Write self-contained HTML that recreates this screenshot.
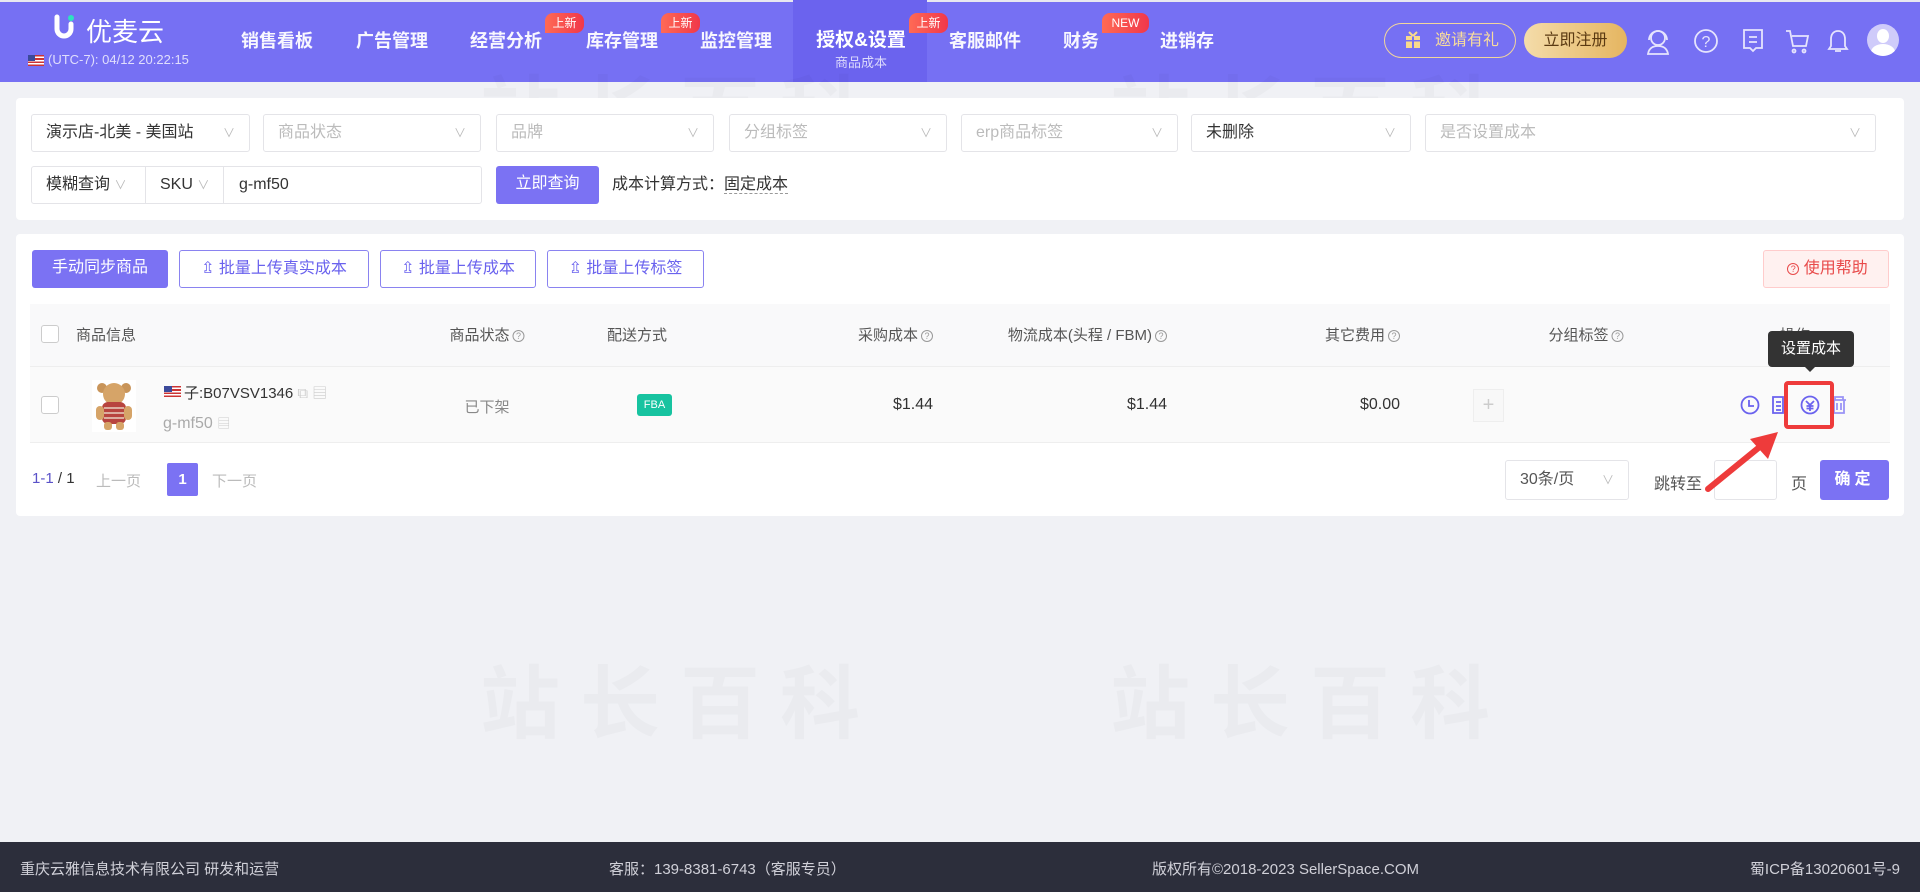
<!DOCTYPE html>
<html><head><meta charset="utf-8">
<style>
*{box-sizing:border-box;margin:0;padding:0}
body{width:1920px;height:892px;background:#f0f1f5;font-family:"Liberation Sans","Noto Sans CJK SC",sans-serif;font-size:16px;color:#333;position:relative;overflow:hidden}
.a{position:absolute}
.hdr{left:0;top:0;width:1920px;height:82px;background:#7670f3;border-top:2px solid #e8e8f0}
.nav{top:27px;color:#fff;font-size:18px;font-weight:bold;transform:translateX(-50%);white-space:nowrap;opacity:.95}
.badge{height:20px;background:linear-gradient(90deg,#ff6a55,#f0374a);color:#fff;font-size:12px;line-height:20px;text-align:center;border-radius:8px 8px 8px 0}
.card{background:#fff;border-radius:4px}
.sel{height:38px;border:1px solid #e4e4e8;border-radius:3px;background:#fff;font-size:16px;line-height:36px;padding-left:14px;color:#bbb}
.sel .ch{position:absolute;right:14px;top:0;color:#bbb;font-size:12px}
.btn{height:38px;border-radius:3px;font-size:16px;line-height:36px;text-align:center}
.ob{border:1px solid #8a83f0;color:#6a62ee;background:#fff}
.pb{background:#7b72f3;color:#fff}
.th{top:324px;font-size:15px;color:#555;white-space:nowrap}
.q{display:inline-block;width:12px;height:12px;border:1px solid #999;border-radius:50%;font-size:9px;line-height:10px;text-align:center;color:#999;vertical-align:1px;margin-left:3px}
.cb{width:18px;height:18px;border:1px solid #ccc;border-radius:3px;background:#fff}
.ft{top:858px;color:#d0d0d8;font-size:15px;white-space:nowrap}
.wm{font-size:80px;color:rgba(0,0,0,.025);letter-spacing:20px;font-weight:bold}
</style></head><body>
<div class="a hdr"></div>
<svg class="a" style="left:52px;top:14px" width="30" height="28" viewBox="0 0 30 28"><path d="M5 3v12a7 7 0 0 0 14 0V10" stroke="#fff" stroke-width="5" fill="none" stroke-linecap="round"/><circle cx="19" cy="4" r="3" fill="#2ee0c0"/></svg>
<div class="a" style="left:86px;top:12px;color:#fff;font-size:26px">优麦云</div>
<div class="a" style="left:28px;top:55px;width:16px;height:11px;background:repeating-linear-gradient(#c33 0 1.6px,#fff 1.6px 3.2px)"><div style="width:7px;height:6px;background:#3b4a9a"></div></div>
<div class="a" style="left:48px;top:52px;color:#e0defc;font-size:13px">(UTC-7): 04/12 20:22:15</div>
<div class="a" style="left:793px;top:0;width:134px;height:82px;background:#6b63ee"></div>
<div class="a nav" style="left:277px">销售看板</div>
<div class="a nav" style="left:392px">广告管理</div>
<div class="a nav" style="left:506px">经营分析</div>
<div class="a nav" style="left:622px">库存管理</div>
<div class="a nav" style="left:736px">监控管理</div>
<div class="a nav" style="left:861px;top:25px;font-size:19px;opacity:1">授权&amp;设置</div>
<div class="a" style="left:861px;top:52px;transform:translateX(-50%);color:#dcdafc;font-size:13px">商品成本</div>
<div class="a nav" style="left:985px">客服邮件</div>
<div class="a nav" style="left:1081px">财务</div>
<div class="a nav" style="left:1187px">进销存</div>
<div class="a badge" style="left:545px;top:13px;width:39px">上新</div>
<div class="a badge" style="left:661px;top:13px;width:39px">上新</div>
<div class="a badge" style="left:909px;top:13px;width:39px">上新</div>
<div class="a badge" style="left:1102px;top:13px;width:47px">NEW</div>
<div class="a" style="left:1384px;top:23px;width:132px;height:35px;border:1px solid #f2d69c;border-radius:18px;color:#f8dc9c;font-size:16px;line-height:33px;padding-left:50px">邀请有礼</div>
<svg class="a" style="left:1405px;top:31px" width="16" height="18" viewBox="0 0 16 18"><rect x="1" y="5" width="14" height="12" fill="#f8d98c"/><rect x="7" y="5" width="2" height="12" fill="#7670f3"/><rect x="1" y="9" width="14" height="1.5" fill="#7670f3"/><path d="M8 5L4 1M8 5l4-4" stroke="#f8d98c" stroke-width="2"/></svg>
<div class="a" style="left:1524px;top:23px;width:103px;height:35px;border-radius:18px;background:linear-gradient(90deg,#f4dcaa,#e5b560);color:#5b3a12;font-size:16px;line-height:35px;text-align:center">立即注册</div>
<svg class="a" style="left:1644px;top:26px" width="170" height="30" viewBox="0 0 170 30" fill="none" stroke="#e6e4fd" stroke-width="1.8">
<circle cx="14" cy="12" r="7"/><path d="M5 14a9 9 0 0 1 18 0M4 28c1-6 5-8 10-8s9 2 10 8z"/>
<circle cx="62" cy="15" r="11"/><text x="62" y="21" font-size="16" fill="#e6e4fd" stroke="none" text-anchor="middle" font-family="Liberation Sans">?</text>
<path d="M100 4h18v18h-6l-3 3-3-3h-6z"/><path d="M105 11h8M105 16h8"/>
<path d="M142 5h4l3 15h13l2-10h-16"/><circle cx="150" cy="25" r="1.5"/><circle cx="160" cy="25" r="1.5"/>
</svg>
<svg class="a" style="left:1827px;top:28px" width="22" height="26" viewBox="0 0 22 26" fill="none" stroke="#e6e4fd" stroke-width="1.8"><path d="M11 3c-5 0-7 4-7 8v7l-2 3h18l-2-3v-7c0-4-2-8-7-8zM8 23h6"/></svg>
<div class="a" style="left:1867px;top:24px;width:32px;height:32px;border-radius:50%;background:#cfcbfa;overflow:hidden"><div style="position:absolute;left:10px;top:5px;width:12px;height:14px;border-radius:50%;background:#fff"></div><div style="position:absolute;left:4px;top:20px;width:24px;height:16px;border-radius:50%;background:#fff"></div></div>

<div class="a wm" style="left:480px;top:50px">站长百科</div>
<div class="a wm" style="left:1110px;top:50px">站长百科</div>
<div class="a wm" style="left:780px;top:360px">站长百科</div>
<div class="a wm" style="left:480px;top:640px">站长百科</div>
<div class="a wm" style="left:1110px;top:640px">站长百科</div>

<div class="a card" style="left:16px;top:98px;width:1888px;height:122px"></div>
<div class="a sel" style="left:31px;top:114px;width:219px;color:#333">演示店-北美 - 美国站<span class="ch">∨</span></div>
<div class="a sel" style="left:263px;top:114px;width:218px">商品状态<span class="ch">∨</span></div>
<div class="a sel" style="left:496px;top:114px;width:218px">品牌<span class="ch">∨</span></div>
<div class="a sel" style="left:729px;top:114px;width:218px">分组标签<span class="ch">∨</span></div>
<div class="a sel" style="left:961px;top:114px;width:217px">erp商品标签<span class="ch">∨</span></div>
<div class="a sel" style="left:1191px;top:114px;width:220px;color:#333">未删除<span class="ch">∨</span></div>
<div class="a sel" style="left:1425px;top:114px;width:451px">是否设置成本<span class="ch">∨</span></div>
<div class="a sel" style="left:31px;top:166px;width:451px;color:#333"></div>
<div class="a" style="left:46px;top:175px;font-size:16px;line-height:20px">模糊查询 <span style="color:#bbb;font-size:12px">∨</span></div>
<div class="a" style="left:145px;top:167px;width:1px;height:36px;background:#e4e4e8"></div>
<div class="a" style="left:160px;top:175px;font-size:16px;line-height:20px">SKU <span style="color:#bbb;font-size:12px">∨</span></div>
<div class="a" style="left:223px;top:167px;width:1px;height:36px;background:#e4e4e8"></div>
<div class="a" style="left:239px;top:175px;font-size:16px;line-height:20px">g-mf50</div>
<div class="a btn pb" style="left:496px;top:166px;width:103px">立即查询</div>
<div class="a" style="left:612px;top:175px;font-size:16px;line-height:20px">成本计算方式：<span style="border-bottom:1px dashed #999">固定成本</span></div>

<div class="a card" style="left:16px;top:234px;width:1888px;height:282px"></div>
<div class="a btn pb" style="left:32px;top:250px;width:136px">手动同步商品</div>
<div class="a btn ob" style="left:179px;top:250px;width:190px">⇫ 批量上传真实成本</div>
<div class="a btn ob" style="left:380px;top:250px;width:156px">⇫ 批量上传成本</div>
<div class="a btn ob" style="left:547px;top:250px;width:157px">⇫ 批量上传标签</div>
<div class="a btn" style="left:1763px;top:250px;width:126px;background:#fff1f0;border:1px solid #fcc;color:#e84a4a"><span class="q" style="border-color:#e84a4a;color:#e84a4a">?</span> 使用帮助</div>
<div class="a" style="left:30px;top:304px;width:1860px;height:63px;background:#f9f9fa;border-bottom:1px solid #eee"></div>
<div class="a cb" style="left:41px;top:325px"></div>
<div class="a th" style="left:76px">商品信息</div>
<div class="a th" style="left:487px;transform:translateX(-50%)">商品状态<span class="q">?</span></div>
<div class="a th" style="left:637px;transform:translateX(-50%)">配送方式</div>
<div class="a th" style="right:987px">采购成本<span class="q">?</span></div>
<div class="a th" style="right:753px">物流成本(头程 / FBM)<span class="q">?</span></div>
<div class="a th" style="right:520px">其它费用<span class="q">?</span></div>
<div class="a th" style="left:1586px;transform:translateX(-50%)">分组标签<span class="q">?</span></div>
<div class="a th" style="left:1780px">操作</div>
<div class="a" style="left:30px;top:367px;width:1860px;height:76px;background:#fafafa;border-bottom:1px solid #eee"></div>
<div class="a cb" style="left:41px;top:396px"></div>
<svg class="a" style="left:92px;top:380px" width="44" height="52" viewBox="0 0 44 52"><rect width="44" height="52" fill="#fff"/><circle cx="10" cy="8" r="5" fill="#c9955a"/><circle cx="34" cy="8" r="5" fill="#c9955a"/><circle cx="22" cy="14" r="11" fill="#d6a468"/><rect x="10" y="22" width="24" height="22" rx="6" fill="#b8443f"/><path d="M12 28h20M12 33h20M12 38h20" stroke="#e8d0c0" stroke-width="1.5"/><rect x="4" y="26" width="8" height="14" rx="4" fill="#d6a468"/><rect x="32" y="26" width="8" height="14" rx="4" fill="#d6a468"/><rect x="12" y="42" width="8" height="8" rx="3" fill="#d6a468"/><rect x="24" y="42" width="8" height="8" rx="3" fill="#d6a468"/></svg>
<div class="a" style="left:164px;top:386px;width:17px;height:11px;background:repeating-linear-gradient(#c33 0 1.6px,#fff 1.6px 3.2px)"><div style="width:8px;height:6px;background:#3b4a9a"></div></div>
<div class="a" style="left:184px;top:382px;font-size:15px;color:#333">子:B07VSV1346 <span style="color:#ccc">⧉ ▤</span></div>
<div class="a" style="left:163px;top:413px;font-size:16px;color:#aaa">g-mf50 <span style="color:#ccc;font-size:13px">▤</span></div>
<div class="a" style="left:487px;top:396px;transform:translateX(-50%);color:#888;font-size:15px">已下架</div>
<div class="a" style="left:637px;top:394px;width:35px;height:22px;background:#17c3a0;color:#fff;font-size:11px;line-height:22px;text-align:center;border-radius:3px">FBA</div>
<div class="a" style="right:987px;top:396px;font-size:16px">$1.44</div>
<div class="a" style="right:753px;top:396px;font-size:16px">$1.44</div>
<div class="a" style="right:520px;top:396px;font-size:16px">$0.00</div>
<div class="a" style="left:1473px;top:389px;width:31px;height:33px;border:1px solid #eee;background:#f8f8f8;color:#ccc;text-align:center;line-height:30px;font-size:20px">+</div>
<svg class="a" style="left:1738px;top:393px" width="112" height="24" viewBox="0 0 112 24" fill="none" stroke="#6a62ee" stroke-width="1.8">
<circle cx="12" cy="12" r="8.5"/><path d="M11 7v6h5"/>
<path d="M35 4h10v16h-10zM38 9h5M38 13h5M38 17h5"/>
<circle cx="72" cy="12" r="8.5"/><path d="M68 8l4 4 4-4M72 12v6M68.5 13h7M68.5 15.5h7"/>
<path d="M94 7h14M97 7V4h8v3M96 7v13h10V7M99 10v7M103 10v7" stroke="#9a94f5"/>
</svg>
<div class="a" style="left:1784px;top:381px;width:50px;height:48px;border:4px solid #ee3b3b;border-radius:4px"></div>
<div class="a" style="left:1768px;top:331px;width:86px;height:36px;background:#333;border-radius:4px;color:#fff;font-size:15px;line-height:36px;text-align:center">设置成本</div>
<div class="a" style="left:1804px;top:366px;width:0;height:0;border:6px solid transparent;border-top-color:#333"></div>
<div class="a" style="left:32px;top:470px;font-size:15px;color:#5a52c8">1-1 <span style="color:#333">/ 1</span></div>
<div class="a" style="left:96px;top:470px;font-size:15px;color:#bbb">上一页</div>
<div class="a" style="left:167px;top:463px;width:31px;height:33px;background:#7b72f3;color:#fff;font-size:15px;font-weight:bold;line-height:33px;text-align:center;border-radius:2px">1</div>
<div class="a" style="left:212px;top:470px;font-size:15px;color:#bbb">下一页</div>
<div class="a sel" style="left:1505px;top:460px;width:124px;height:40px;color:#555;line-height:38px">30条/页<span class="ch">∨</span></div>
<div class="a" style="left:1654px;top:470px;font-size:16px;color:#555">跳转至</div>
<div class="a" style="left:1714px;top:460px;width:63px;height:40px;border:1px solid #e4e4e8;border-radius:3px;background:#fff"></div>
<div class="a" style="left:1791px;top:470px;font-size:16px;color:#555">页</div>
<div class="a btn pb" style="left:1820px;top:460px;width:69px;height:40px;line-height:40px;font-weight:bold;letter-spacing:4px">确定</div>
<svg class="a" style="left:1700px;top:425px" width="90" height="70" viewBox="0 0 90 70"><path d="M8 64L62 20" stroke="#ee3b3b" stroke-width="6" stroke-linecap="round"/><path d="M78 7L50 14l18 20z" fill="#ee3b3b"/></svg>

<div class="a" style="left:0;top:842px;width:1920px;height:50px;background:#2c2e3b"></div>
<div class="a ft" style="left:20px">重庆云雅信息技术有限公司 研发和运营</div>
<div class="a ft" style="left:609px">客服：139-8381-6743（客服专员）</div>
<div class="a ft" style="left:1152px">版权所有©2018-2023 SellerSpace.COM</div>
<div class="a ft" style="right:20px">蜀ICP备13020601号-9</div>
</body></html>
